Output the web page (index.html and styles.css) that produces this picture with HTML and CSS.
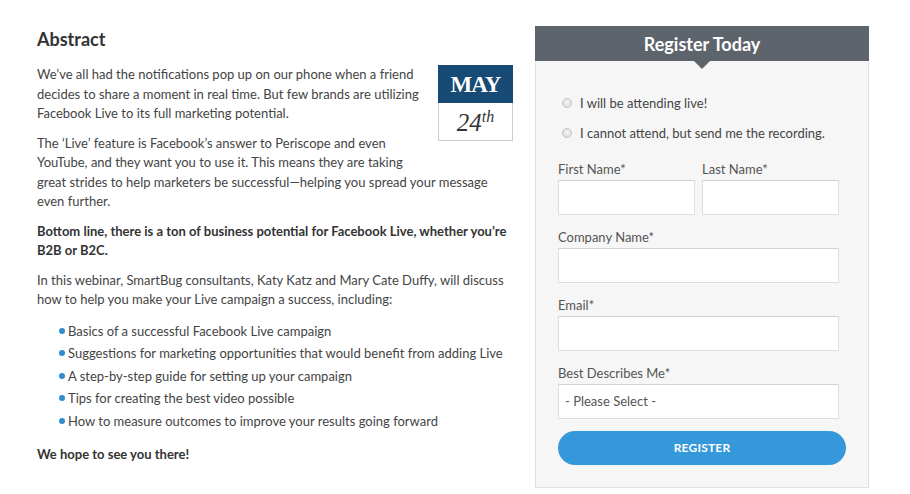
FILE: index.html
```html
<!DOCTYPE html>
<html>
<head>
<meta charset="utf-8">
<link rel="stylesheet" href="styles.css">
</head>
<body>
<div class="page">
  <div class="content">
    <h2 class="title">Abstract</h2>
    <div class="date">
      <div class="month">MAY</div>
      <div class="day">24<sup>th</sup></div>
    </div>
    <p>We’ve all had the notifications pop up on our phone when a friend decides to share a moment in real time. But few brands are utilizing Facebook Live to its full marketing potential.</p>
    <p>The ‘Live’ feature is Facebook’s answer to Periscope and even YouTube, and they want you to use it. This means they are taking great strides to help marketers be successful—helping you spread your message even further.</p>
    <p class="strong">Bottom line, there is a ton of business potential for Facebook Live, whether you’re B2B or B2C.</p>
    <p>In this webinar, SmartBug consultants, Katy Katz and Mary Cate Duffy, will discuss how to help you make your Live campaign a success, including:</p>
    <ul class="list">
      <li>Basics of a successful Facebook Live campaign</li>
      <li>Suggestions for marketing opportunities that would benefit from adding Live</li>
      <li>A step-by-step guide for setting up your campaign</li>
      <li>Tips for creating the best video possible</li>
      <li>How to measure outcomes to improve your results going forward</li>
    </ul>
    <p class="strong">We hope to see you there!</p>
  </div>
  <div class="panel">
    <div class="panel-head">Register Today</div>
    <form class="form">
      <div class="radios">
        <label class="radio"><span class="dot"></span>I will be attending live!</label>
        <label class="radio"><span class="dot"></span>I cannot attend, but send me the recording.</label>
      </div>
      <div class="row">
        <div class="field half">
          <label class="lbl">First Name*</label>
          <div class="input"></div>
        </div>
        <div class="field half">
          <label class="lbl">Last Name*</label>
          <div class="input"></div>
        </div>
      </div>
      <div class="field">
        <label class="lbl">Company Name*</label>
        <div class="input"></div>
      </div>
      <div class="field">
        <label class="lbl">Email*</label>
        <div class="input"></div>
      </div>
      <div class="field">
        <label class="lbl">Best Describes Me*</label>
        <div class="input select">- Please Select -</div>
      </div>
      <div class="btn">REGISTER</div>
    </form>
  </div>
</div>
</body>
</html>
```

FILE: styles.css
```css
* { box-sizing: border-box; }
body {
  margin: 0;
  background: #fff;
  font-family: Lato, "Open Sans", sans-serif;
  color: #444;
}
.page {
  display: flex;
  align-items: flex-start;
  padding: 26px 0 0 37px;
  gap: 20px;
}
.content {
  width: 478px;
  font-size: 13px;
  line-height: 19.5px;
}
.title {
  margin: 2px 0 15px;
  font-size: 18px;
  line-height: 22px;
  font-weight: 700;
  color: #333;
}
.date {
  float: right;
  width: 75px;
  margin: 0 2px 20px 10px;
  text-align: center;
  font-family: "Liberation Serif", "Times New Roman", serif;
}
.month {
  height: 38px;
  background: #174a75;
  color: #fff;
  font-weight: 700;
  font-size: 23px;
  line-height: 39px;
  letter-spacing: -1px;
}
.day {
  height: 38px;
  border: 1px solid #ccc;
  border-top: 0;
  background: #fff;
  color: #333;
  font-style: italic;
  font-size: 25px;
  line-height: 39px;
}
.day sup {
  font-size: 16px;
  line-height: 0;
  vertical-align: 9px;
}
p { margin: 0 0 10px; }
.strong { font-weight: 700; color: #333; }
.list {
  margin: 0 0 13px;
  padding: 0 0 0 31px;
  list-style: none;
}
.list li {
  position: relative;
  line-height: 22.5px;
}
.list li::before {
  content: "";
  position: absolute;
  left: -9px;
  top: 8px;
  width: 6px;
  height: 6px;
  border-radius: 50%;
  background: #2e8ccf;
}
.panel {
  width: 334px;
  background: #f6f6f6;
  border: 1px solid #e0e0e0;
  border-top: 0;
}
.panel-head {
  position: relative;
  height: 35px;
  background: #5d646c;
  color: #fff;
  text-align: center;
  font-size: 18px;
  font-weight: 700;
  line-height: 36px;
  margin: 0 -1px;
}
.panel-head::after {
  content: "";
  position: absolute;
  left: 50%;
  top: 35px;
  margin-left: -8px;
  border-left: 8px solid transparent;
  border-right: 8px solid transparent;
  border-top: 8px solid #5d646c;
}
.form {
  padding: 27px 29px 22px 22px;
}
.radios {
  padding-left: 4px;
  margin-bottom: 12px;
}
.radio {
  display: flex;
  align-items: center;
  height: 30px;
  font-size: 13px;
  color: #444;
}
.dot {
  width: 10px;
  height: 10px;
  border-radius: 50%;
  border: 1px solid #c3c3c3;
  background: radial-gradient(circle at 50% 40%, #f4f4f4, #d8d8d8);
  margin-right: 8px;
}
.row {
  display: flex;
  gap: 7px;
}
.half { flex: 1; }
.field { margin-bottom: 13px; }
.lbl {
  display: block;
  font-size: 13px;
  line-height: 18px;
  color: #555;
  margin-bottom: 2px;
}
.input {
  height: 35px;
  background: #fff;
  border: 1px solid #dedede;
  border-top-color: #d4d4d4;
}
.select {
  font-size: 13px;
  color: #555;
  padding-left: 6px;
  line-height: 33px;
}
.btn {
  margin-top: -1px;
  margin-right: -7px;
  height: 34px;
  border-radius: 17px;
  background: #3498db;
  color: #fff;
  font-size: 12px;
  font-weight: 700;
  text-align: center;
  line-height: 34px;
  letter-spacing: 0.2px;
}
```
